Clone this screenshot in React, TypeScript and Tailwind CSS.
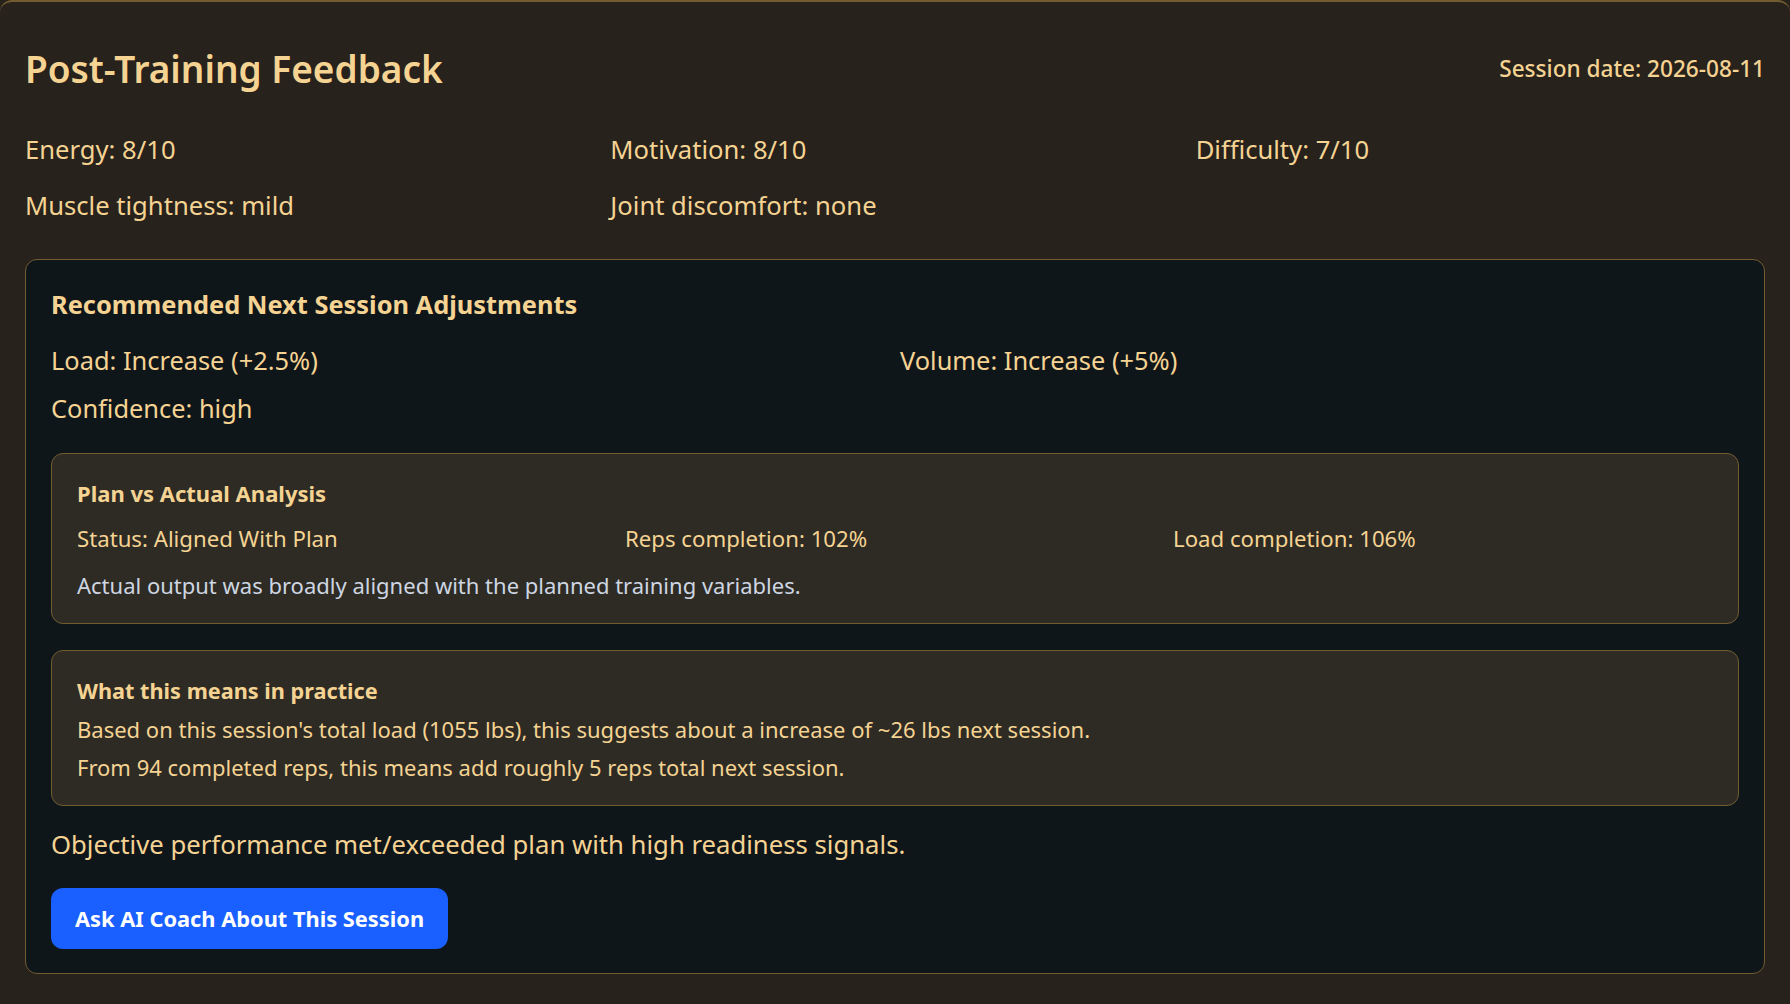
import React from 'react'

const font = { fontFamily: '"Noto Sans", "Open Sans", sans-serif' }

const topStats = [
  'Energy: 8/10',
  'Motivation: 8/10',
  'Difficulty: 7/10',
  'Muscle tightness: mild',
  'Joint discomfort: none',
]

export default function App() {
  return (
    <div className="min-h-screen bg-[#27221b] text-[#f5d393]" style={font}>
      <div className="rounded-xl border-t-2 border-[#735c32] px-[25px] pt-[23px] pb-10">
        {/* header */}
        <div className="mt-[21px] flex items-center justify-between">
          <h1 className="text-[37px] font-semibold leading-[46px]">Post-Training Feedback</h1>
          <div className="text-[22.6px] font-medium leading-[32px]">Session date: 2026-08-11</div>
        </div>

        {/* readiness grid */}
        <div className="mt-[41px] grid grid-cols-3 gap-x-4 gap-y-[22px]">
          {topStats.map((s) => (
            <div key={s} className="text-[25.6px] leading-[34px]">
              {s}
            </div>
          ))}
        </div>

        {/* recommendations card */}
        <div className="mt-[36px] rounded-xl border border-[#735c32] bg-[#0f161a] px-[25px] pt-[27px] pb-6">
          <h2 className="text-[25.4px] font-bold leading-[34px]">Recommended Next Session Adjustments</h2>

          <div className="mt-[20px] grid grid-cols-2 gap-2.5 text-[25.4px] leading-[38px]">
            <div>Load: Increase (+2.5%)</div>
            <div>Volume: Increase (+5%)</div>
            <div>Confidence: high</div>
          </div>

          <div className="mt-[26px] rounded-xl border border-[#735c32] bg-[#2d2b23] px-[25px] pt-[23px] pb-[22px]">
            <h3 className="text-[22px] font-bold leading-[32px]">Plan vs Actual Analysis</h3>
            <div className="mt-[14px] grid grid-cols-3 gap-2 text-[22.2px] leading-[32px]">
              <div>Status: Aligned With Plan</div>
              <div>Reps completion: 102%</div>
              <div>Load completion: 106%</div>
            </div>
            <p className="mt-[14px] text-[22px] leading-[32px] text-[#cdd6e2]">
              Actual output was broadly aligned with the planned training variables.
            </p>
          </div>

          <div className="mt-[26px] rounded-xl border border-[#735c32] bg-[#2d2b23] px-[25px] pt-[24px] pb-[22px]">
            <h3 className="text-[21.7px] font-bold leading-[32px]">What this means in practice</h3>
            <div className="mt-[6px] flex flex-col gap-[6px] text-[22px] leading-[32px]">
              <p>Based on this session's total load (1055 lbs), this suggests about a increase of ~26 lbs next session.</p>
              <p>From 94 completed reps, this means add roughly 5 reps total next session.</p>
            </div>
          </div>

          <p className="mt-[20px] text-[25.7px] leading-[38px]">
            Objective performance met/exceeded plan with high readiness signals.
          </p>

          <button className="mt-[24px] flex h-[61px] items-center rounded-xl bg-[#1a5fff] px-6 text-[21.8px] font-bold leading-[32px] text-white">
            Ask AI Coach About This Session
          </button>
        </div>
      </div>
    </div>
  )
}
